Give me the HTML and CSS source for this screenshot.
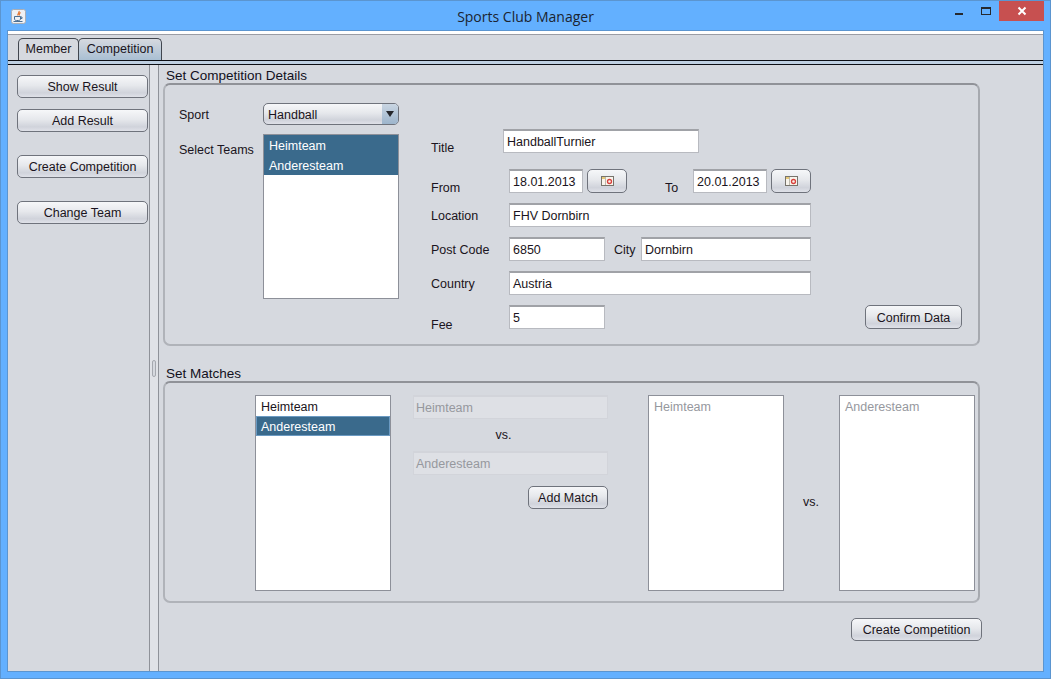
FILE: index.html
```html
<!DOCTYPE html>
<html lang="en">
<head>
  <meta charset="UTF-8">
  <title>Sports Club Manager</title>
  <link rel="stylesheet" href="styles.css">
</head>
<body>
  <div class="window">
    <div class="titlebar">
      <svg class="app-icon" width="15" height="15" viewBox="0 0 15 15">
        <rect x="0.5" y="0.5" width="14" height="14" rx="2" fill="#eef0f4" stroke="#a9adb5"/>
        <path d="M8 2c1 1.500-2 2.500-1 4.500M9.500 3.500c-1 1-2 1.500-1 3" fill="none" stroke="#e2702a" stroke-width="1.200"/>
        <path d="M3.500 7.500h6v2.500c0 1-1 1.500-2 1.500h-2c-1 0-2-.5-2-1.500zM9.500 8h1.500v1.500h-1.500" fill="none" stroke="#4a6f94"/>
        <path d="M2.500 12.500h9" stroke="#4a6f94"/>
      </svg>
      <div class="title">Sports Club Manager</div>
      <div class="win-controls">
        <span class="win-min"></span>
        <span class="win-max"></span>
        <span class="win-close">
          <svg width="10" height="10" viewBox="0 0 10 10"><path d="M1.500 1.500l7 7M8.500 1.500l-7 7" stroke="#fff" stroke-width="2"/></svg>
        </span>
      </div>
    </div>

    <div class="client">
      <div class="tabs">
        <div class="tab">Member</div>
        <div class="tab tab-active">Competition</div>
      </div>
      <div class="tab-rule"></div>

      <div class="split">
        <div class="sidebar">
          <button class="btn side-btn">Show Result</button>
          <button class="btn side-btn">Add Result</button>
          <button class="btn side-btn side-gap">Create Competition</button>
          <button class="btn side-btn side-gap">Change Team</button>
        </div>
        <div class="divider"><span class="grip"></span></div>

        <div class="main">
          <div class="group-title">Set Competition Details</div>
          <div class="group details">
            <div class="col-left">
              <div class="row-sport">
                <span class="lbl lbl-left">Sport</span>
                <div class="combo">
                  <span class="combo-text">Handball</span>
                  <span class="combo-arrow"></span>
                </div>
              </div>
              <div class="row-teams">
                <span class="lbl lbl-left teams-lbl">Select Teams</span>
                <div class="list list-teams">
                  <div class="item selected">Heimteam</div>
                  <div class="item selected">Anderesteam</div>
                </div>
              </div>
            </div>

            <div class="col-form">
              <div class="row row-title">
                <span class="lbl lbl-title">Title</span>
                <div class="field field-title">HandballTurnier</div>
              </div>
              <div class="row row-dates">
                <span class="lbl lbl-form lbl-low">From</span>
                <div class="field field-date">18.01.2013</div>
                <button class="btn cal-btn">
                  <svg width="13" height="10" viewBox="0 0 13 10"><use href="#cal"/></svg>
                </button>
                <span class="lbl lbl-to lbl-low">To</span>
                <div class="field field-date">20.01.2013</div>
                <button class="btn cal-btn">
                  <svg width="13" height="10" viewBox="0 0 13 10"><use href="#cal"/></svg>
                </button>
              </div>
              <div class="row">
                <span class="lbl lbl-form">Location</span>
                <div class="field field-wide">FHV Dornbirn</div>
              </div>
              <div class="row">
                <span class="lbl lbl-form">Post Code</span>
                <div class="field field-short">6850</div>
                <span class="lbl lbl-city">City</span>
                <div class="field field-city">Dornbirn</div>
              </div>
              <div class="row">
                <span class="lbl lbl-form">Country</span>
                <div class="field field-wide">Austria</div>
              </div>
              <div class="row row-fee">
                <span class="lbl lbl-form lbl-fee">Fee</span>
                <div class="field field-short">5</div>
                <button class="btn confirm-btn">Confirm Data</button>
              </div>
            </div>
          </div>

          <div class="group-title matches-title">Set Matches</div>
          <div class="group matches">
            <div class="list list-pick">
              <div class="item">Heimteam</div>
              <div class="item focused">Anderesteam</div>
            </div>
            <div class="col-pair">
              <div class="field field-off">Heimteam</div>
              <div class="vs-mid">vs.</div>
              <div class="field field-off">Anderesteam</div>
              <button class="btn add-btn">Add Match</button>
            </div>
            <div class="list list-result muted"><div class="item">Heimteam</div></div>
            <div class="vs-side">vs.</div>
            <div class="list list-result muted"><div class="item">Anderesteam</div></div>
          </div>

          <div class="footer">
            <button class="btn create-btn">Create Competition</button>
          </div>
        </div>
      </div>
    </div>
  </div>

  <svg width="0" height="0" class="defs">
    <defs>
      <g id="cal">
        <rect x="0.5" y="0.5" width="12" height="9" fill="#f8f4ec" stroke="#77746c"/>
        <path d="M1 1h4v2h-4z" fill="#e6c877"/>
        <path d="M4.500 1v8" stroke="#bdb9ad"/>
        <circle cx="8.500" cy="5.500" r="2" fill="none" stroke="#d8403c" stroke-width="1.300"/>
      </g>
    </defs>
  </svg>
</body>
</html>
```

FILE: styles.css
```css
* {
  box-sizing: border-box;
}

html, body {
  margin: 0;
  height: 100%;
}

body {
  font-family: "Liberation Sans", Arial, sans-serif;
  font-size: 12.5px;
  color: #1a1420;
  overflow: hidden;
}

.defs {
  position: absolute;
}

.window {
  width: 1051px;
  height: 679px;
  background-color: #63b0ff;
  border: 1px solid #5b95d0;
  display: flex;
  flex-direction: column;
  padding: 0 7px 7px 7px;
}

.titlebar {
  height: 30px;
  display: flex;
  align-items: center;
  position: relative;
  flex: none;
}

.app-icon {
  margin-left: 3px;
  margin-top: 0;
}

.title {
  position: absolute;
  left: 0;
  right: 0;
  top: 6px;
  text-align: center;
  font-family: "Open Sans", sans-serif;
  font-size: 14px;
  color: #1b2430;
}

.win-controls {
  position: absolute;
  right: -1px;
  top: 0;
  display: flex;
}

.win-min {
  width: 8px;
  height: 2px;
  background-color: #26292e;
  margin-top: 12px;
  margin-right: 18px;
}

.win-max {
  width: 10px;
  height: 8px;
  border: 1px solid #26292e;
  border-top-width: 2px;
  margin-top: 6px;
  margin-right: 8px;
}

.win-close {
  width: 45px;
  height: 20px;
  background-color: #c75050;
  display: flex;
  align-items: center;
  justify-content: center;
}

.client {
  flex: 1;
  background-color: #d6d9df;
  border-top: 3px solid #ffffff;
  display: flex;
  flex-direction: column;
  box-shadow: inset 0 1px 0 #9a9ca4;
  min-height: 0;
  outline: 1px solid #5b95d0;
}

.tabs {
  display: flex;
  height: 26px;
  padding: 4px 0 0 10px;
  flex: none;
}

.tab {
  width: 61px;
  height: 22px;
  border: 1px solid #41464f;
  border-bottom: none;
  border-radius: 5px 5px 0 0;
  text-align: center;
  line-height: 21px;
}

.tab-active {
  width: 84px;
  margin-left: -1px;
  background: linear-gradient(#d6d9df, #a9bfd3);
}

.tab-rule {
  height: 5px;
  flex: none;
  background-color: #bfd0e2;
  border-top: 1px solid #0c0e14;
  border-bottom: 1px solid #0c0e14;
}

.split {
  flex: 1;
  display: flex;
  min-height: 0;
}

.sidebar {
  width: 141px;
  flex: none;
  padding: 10px 0 0 9px;
  display: flex;
  flex-direction: column;
  gap: 11px;
}

.side-btn {
  width: 131px;
  height: 23px;
  flex: none;
}

.side-gap {
  margin-top: 12px;
}

.btn {
  font-family: inherit;
  font-size: 12.5px;
  color: #1a1420;
  padding: 0;
  border: 1px solid #6f737c;
  border-radius: 5px;
  background: linear-gradient(#f6f7f9 0%, #e6e8ec 45%, #d0d3db 80%, #dfe1e8 100%);
}

.divider {
  width: 10px;
  flex: none;
  border-left: 1px solid #8f9299;
  border-right: 1px solid #8f9299;
  background-color: #e0e2e7;
  display: flex;
  align-items: center;
  justify-content: center;
}

.grip {
  width: 4px;
  height: 17px;
  background-color: #d6d9df;
  border: 1px solid #a5a8af;
  border-radius: 2px;
  margin-top: 0;
}

.main {
  flex: 1;
  padding: 2px 0 0 4px;
  min-width: 0;
}

.group-title {
  font-size: 13.5px;
  height: 16px;
  line-height: 18px;
  padding-left: 3px;
  color: #12101c;
}

.matches-title {
  margin-top: 19px;
}

.group {
  width: 817px;
  border: 2px solid #b0b3b9;
  border-top-color: #909298;
  border-right-color: #a6a9af;
  border-radius: 7px;
  display: flex;
}

.details {
  height: 263px;
  padding: 18px 0 0 14px;
}

.col-left {
  width: 252px;
  flex: none;
}

.row-sport {
  display: flex;
  align-items: center;
  height: 22px;
}

.lbl {
  flex: none;
  white-space: nowrap;
  padding-top: 1px;
}

.lbl-left {
  width: 84px;
}

.row-teams {
  display: flex;
  margin-top: 9px;
}

.teams-lbl {
  margin-top: 8px;
}

.combo {
  width: 136px;
  height: 22px;
  border: 1px solid #6f737c;
  border-radius: 5px;
  background: linear-gradient(#f6f7f9 0%, #e6e8ec 45%, #d0d3db 80%, #dfe1e8 100%);
  display: flex;
  align-items: center;
  justify-content: space-between;
  padding-left: 4px;
  overflow: hidden;
}

.combo-text {
  padding-top: 1px;
}

.combo-arrow {
  width: 16px;
  height: 20px;
  background: linear-gradient(#c9d5e2, #9db5cc);
  position: relative;
}

.combo-arrow::after {
  content: "";
  position: absolute;
  left: 4px;
  top: 7px;
  border-left: 4px solid transparent;
  border-right: 4px solid transparent;
  border-top: 6px solid #25272c;
}

.list {
  background-color: #fff;
  border: 1px solid #8d9099;
  flex: none;
}

.list-teams {
  width: 136px;
  height: 165px;
}

.item {
  height: 20px;
  line-height: 22px;
  padding-left: 5px;
  white-space: nowrap;
}

.selected {
  background-color: #3a6a8c;
  color: #fff;
}

.focused {
  background-color: #3a6a8c;
  color: #fff;
  border: 1px solid #6b9ac2;
  padding-left: 4px;
  line-height: 20px;
}

.muted .item {
  color: #96989e;
}

.col-form {
  width: 380px;
  flex: none;
  margin-top: 26px;
  margin-left: 0;
  display: flex;
  flex-direction: column;
}

.row {
  display: flex;
  align-items: center;
  height: 24px;
  margin-bottom: 10px;
}

.row-title {
  margin-bottom: 16px;
}

.lbl-title {
  width: 72px;
  padding-top: 13px;
}

.lbl-form {
  width: 78px;
}

.lbl-low {
  padding-top: 13px;
}

.lbl-fee {
  padding-top: 16px;
}

.lbl-to {
  margin-left: 38px;
  width: 28px;
}

.lbl-city {
  margin-left: 9px;
  width: 27px;
}

.field {
  height: 24px;
  line-height: 22px;
  background-color: #fff;
  border: 1px solid #b8bac0;
  border-top: 2px solid #a0a2a7;
  padding-left: 3px;
  white-space: nowrap;
  flex: none;
}

.field-title {
  width: 196px;
}

.field-date {
  width: 74px;
}

.field-wide {
  width: 302px;
}

.field-short {
  width: 96px;
}

.field-city {
  width: 170px;
}

.cal-btn {
  width: 40px;
  height: 24px;
  margin-left: 4px;
  display: flex;
  align-items: center;
  justify-content: center;
}

.row-fee {
  margin-bottom: 0;
}

.confirm-btn {
  width: 97px;
  height: 24px;
  margin-left: 260px;
  padding-top: 1px;
  flex: none;
}

.matches {
  height: 222px;
  padding: 12px 0 0 90px;
}

.list-pick {
  width: 136px;
  height: 196px;
}

.col-pair {
  width: 195px;
  margin-left: 22px;
  flex: none;
  display: flex;
  flex-direction: column;
}

.field-off {
  width: 195px;
  background-color: #dee0e5;
  border-color: #d2d4da;
  color: #96989e;
  padding-left: 2px;
}

.vs-mid {
  height: 32px;
  line-height: 32px;
  text-align: center;
  padding-right: 14px;
}

.add-btn {
  width: 80px;
  height: 23px;
  margin-top: 11px;
  padding-top: 1px;
  align-self: flex-end;
}

.list-result {
  width: 136px;
  height: 196px;
  margin-left: 40px;
}

.vs-side {
  width: 55px;
  margin-right: -40px;
  padding: 100px 0 0 19px;
  flex: none;
}

.footer {
  width: 819px;
  display: flex;
  justify-content: flex-end;
  margin-top: 15px;
}

.create-btn {
  width: 131px;
  height: 23px;
  padding-top: 1px;
}
```
